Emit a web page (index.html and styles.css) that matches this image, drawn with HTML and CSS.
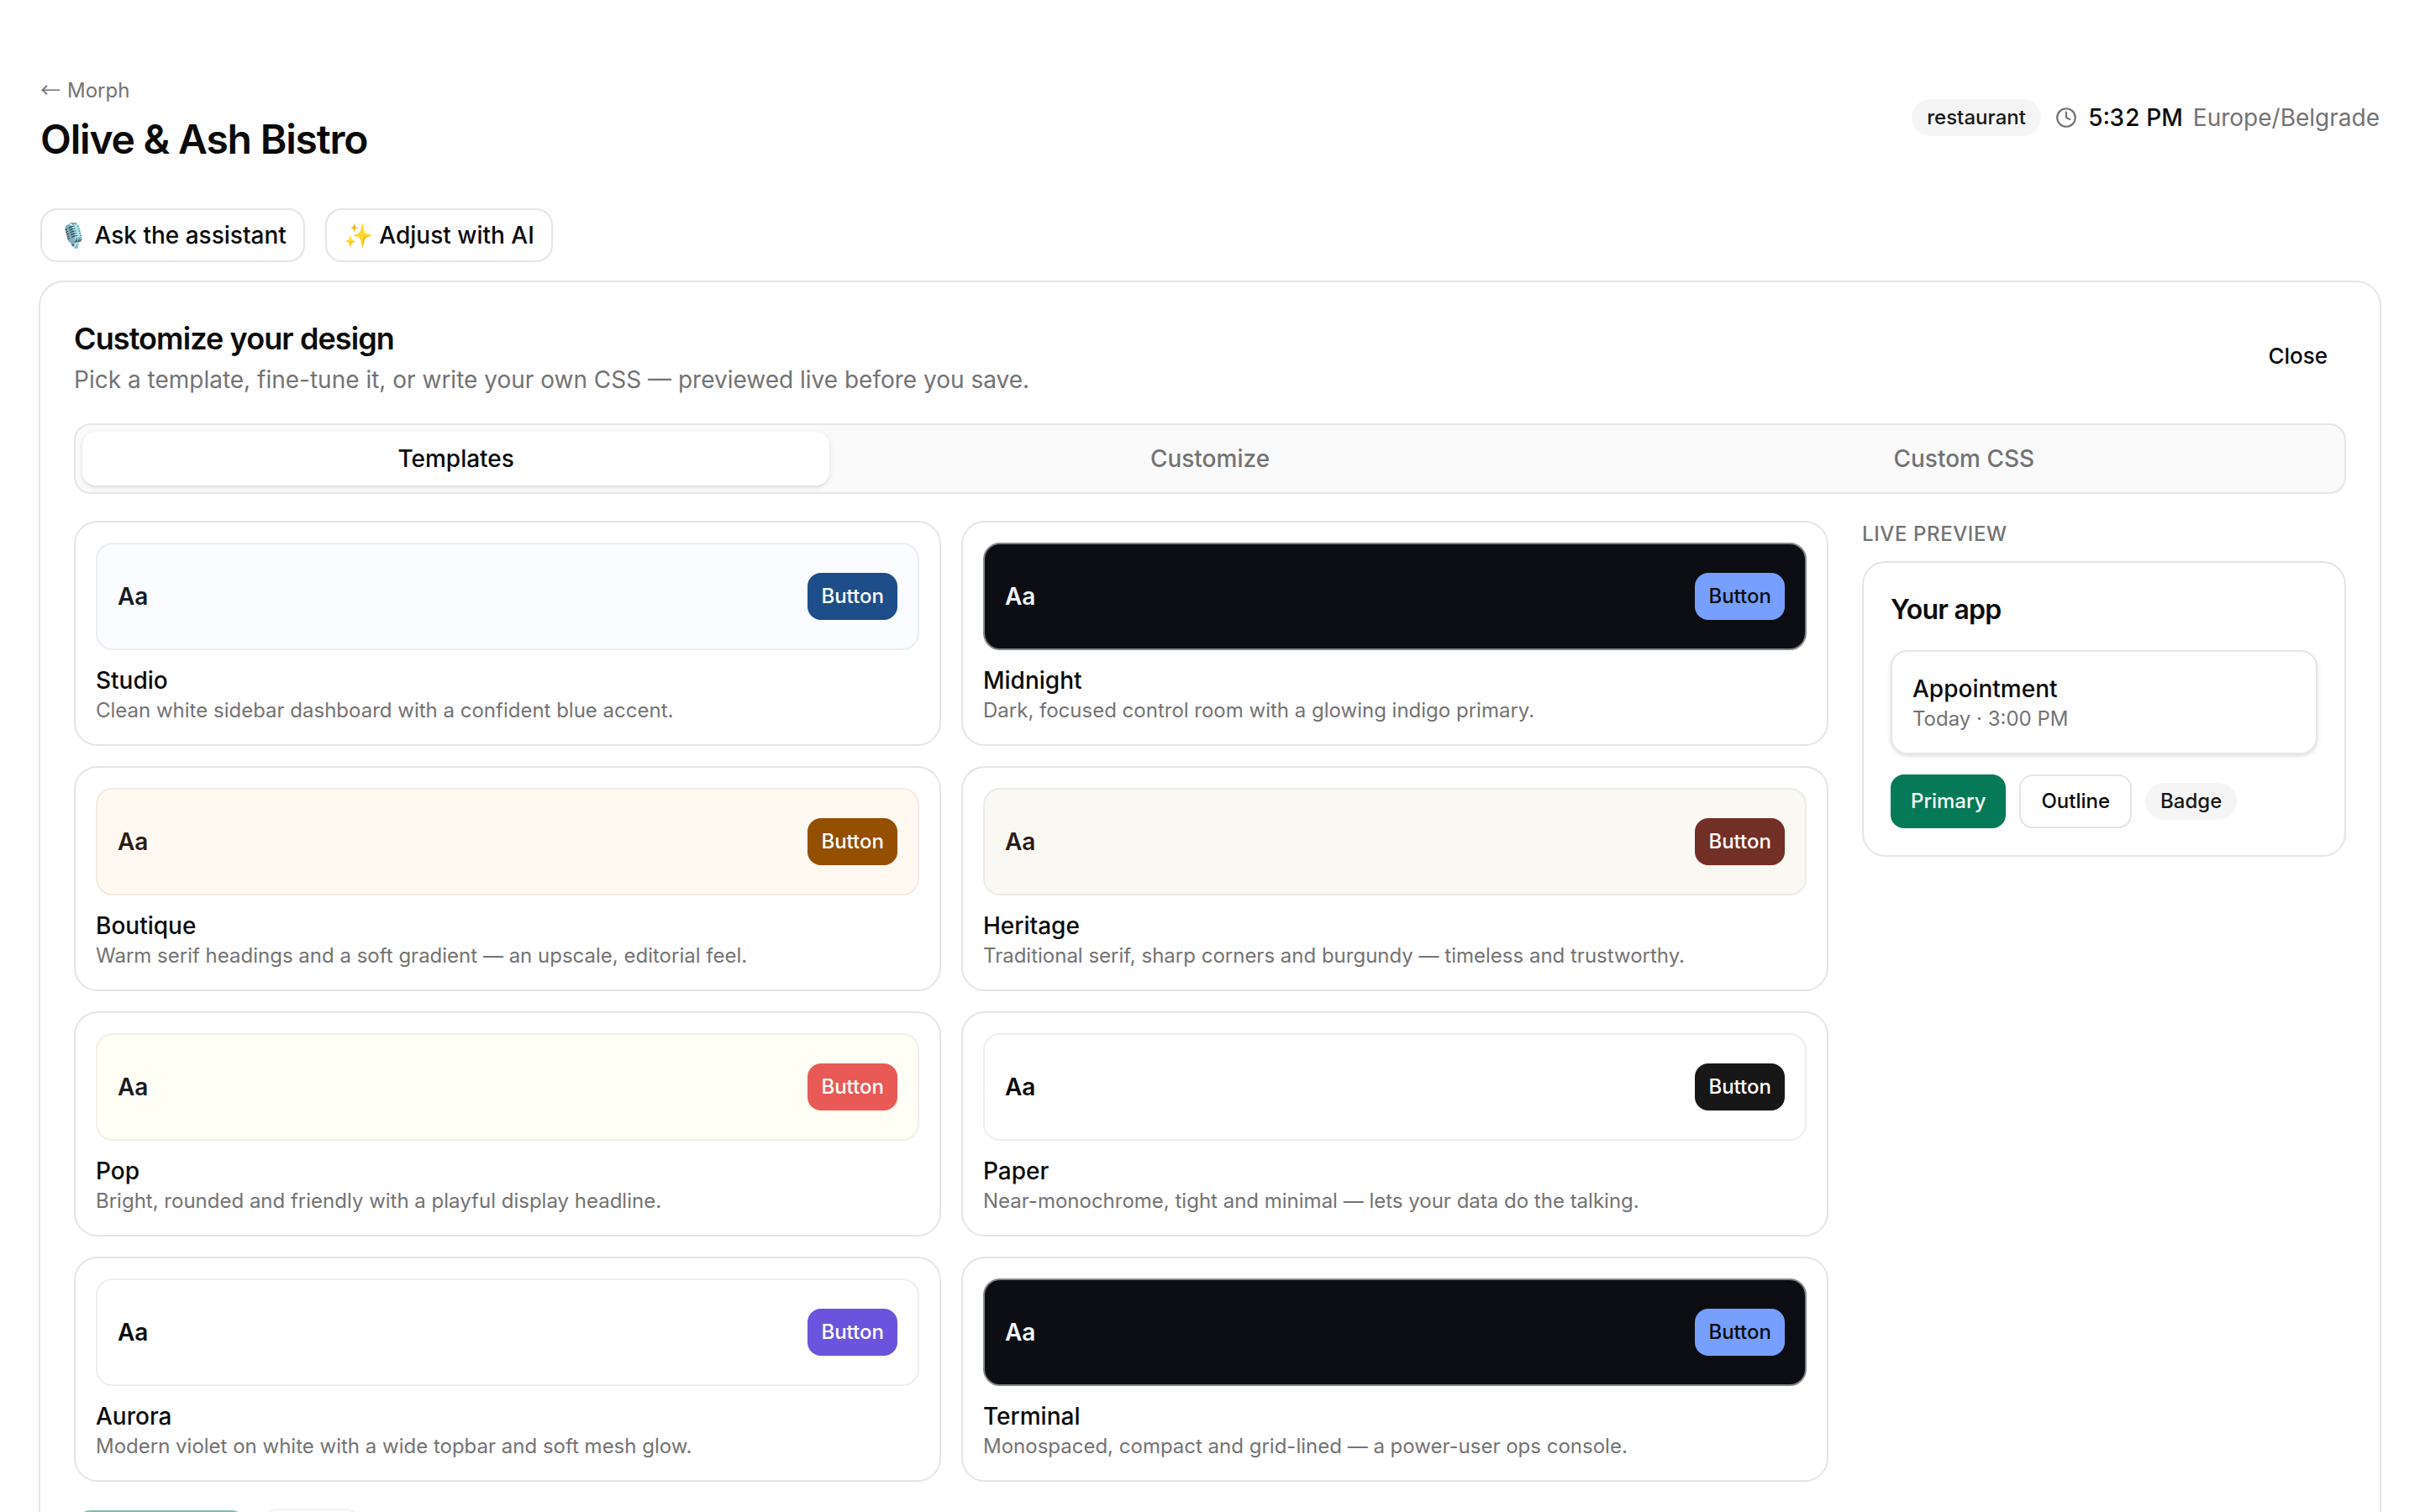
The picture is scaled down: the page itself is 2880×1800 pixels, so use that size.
FILE: index.html
```html
<!DOCTYPE html>
<html lang="en">
<head>
<meta charset="utf-8">
<meta name="viewport" content="width=device-width, initial-scale=1">
<title>Olive &amp; Ash Bistro</title>
<link rel="stylesheet" href="styles.css">
</head>
<body>
<main class="page">
  <header class="page-header">
    <div class="page-heading">
      <a class="back-link" href="#"><span class="back-arrow">←</span> Morph</a>
      <h1 class="page-title">Olive &amp; Ash Bistro</h1>
    </div>
    <div class="page-meta">
      <span class="badge">restaurant</span>
      <span class="clock">
        <svg class="clock-icon" viewBox="-1 -1 26 26" fill="none" stroke="currentColor" stroke-width="2" stroke-linecap="round" stroke-linejoin="round" aria-hidden="true"><circle cx="12" cy="12" r="10"/><path d="M12 6v6l4 2"/></svg>
        <time class="clock-time">5:32 PM</time>
        <span>Europe/Belgrade</span>
      </span>
    </div>
  </header>

  <div class="toolbar">
    <button class="btn btn-large" type="button">🎙️ Ask the assistant</button>
    <button class="btn btn-large" type="button">✨ Adjust with AI</button>
  </div>

  <section class="panel">
    <header class="panel-header">
      <div>
        <h2 class="panel-title">Customize your design</h2>
        <p class="panel-text">Pick a template, fine-tune it, or write your own CSS — previewed live before you save.</p>
      </div>
      <button class="btn btn-ghost" type="button">Close</button>
    </header>

    <div class="tabs" role="tablist">
      <button class="tab tab-active" type="button" role="tab" aria-selected="true">Templates</button>
      <button class="tab" type="button" role="tab" aria-selected="false">Customize</button>
      <button class="tab" type="button" role="tab" aria-selected="false">Custom CSS</button>
    </div>

    <div class="editor">
      <div class="templates">
        <button class="template" type="button">
          <span class="swatch studio"><span class="swatch-type">Aa</span><span class="swatch-button">Button</span></span>
          <span class="template-name">Studio</span>
          <span class="template-text">Clean white sidebar dashboard with a confident blue accent.</span>
        </button>
        <button class="template" type="button">
          <span class="swatch midnight"><span class="swatch-type">Aa</span><span class="swatch-button">Button</span></span>
          <span class="template-name">Midnight</span>
          <span class="template-text">Dark, focused control room with a glowing indigo primary.</span>
        </button>
        <button class="template" type="button">
          <span class="swatch boutique"><span class="swatch-type">Aa</span><span class="swatch-button">Button</span></span>
          <span class="template-name">Boutique</span>
          <span class="template-text">Warm serif headings and a soft gradient — an upscale, editorial feel.</span>
        </button>
        <button class="template" type="button">
          <span class="swatch heritage"><span class="swatch-type">Aa</span><span class="swatch-button">Button</span></span>
          <span class="template-name">Heritage</span>
          <span class="template-text">Traditional serif, sharp corners and burgundy — timeless and trustworthy.</span>
        </button>
        <button class="template" type="button">
          <span class="swatch pop"><span class="swatch-type">Aa</span><span class="swatch-button">Button</span></span>
          <span class="template-name">Pop</span>
          <span class="template-text">Bright, rounded and friendly with a playful display headline.</span>
        </button>
        <button class="template" type="button">
          <span class="swatch paper"><span class="swatch-type">Aa</span><span class="swatch-button">Button</span></span>
          <span class="template-name">Paper</span>
          <span class="template-text">Near-monochrome, tight and minimal — lets your data do the talking.</span>
        </button>
        <button class="template" type="button">
          <span class="swatch aurora"><span class="swatch-type">Aa</span><span class="swatch-button">Button</span></span>
          <span class="template-name">Aurora</span>
          <span class="template-text">Modern violet on white with a wide topbar and soft mesh glow.</span>
        </button>
        <button class="template" type="button">
          <span class="swatch midnight"><span class="swatch-type">Aa</span><span class="swatch-button">Button</span></span>
          <span class="template-name">Terminal</span>
          <span class="template-text">Monospaced, compact and grid-lined — a power-user ops console.</span>
        </button>
      </div>

      <aside class="preview">
        <h3 class="preview-label">Live preview</h3>
        <div class="preview-frame">
          <h4 class="preview-title">Your app</h4>
          <div class="preview-card">
            <p class="template-name">Appointment</p>
            <p class="template-text">Today · 3:00 PM</p>
          </div>
          <div class="preview-actions">
            <button class="sample sample-primary" type="button">Primary</button>
            <button class="sample sample-outline" type="button">Outline</button>
            <span class="badge">Badge</span>
          </div>
        </div>
      </aside>
    </div>

    <footer class="panel-footer">
      <button class="btn btn-large btn-primary" type="button" disabled>Save design</button>
      <button class="btn btn-large" type="button" disabled>Reset</button>
    </footer>
  </section>
</main>
</body>
</html>
```
FILE: styles.css
```css
:root {
  --text: #0a0a0a;
  --muted: #737373;
  --border: #e5e5e5;
  --primary: #067a57;
}

* {
  box-sizing: border-box;
}

body {
  margin: 0;
  background: #fff;
  color: var(--text);
  font: 400 28px/40px Inter, "Liberation Sans", sans-serif;
}

h1, h2, h3, h4, p {
  margin: 0;
}

button {
  font: inherit;
  color: inherit;
}

.page {
  padding: 82px 46px 48px;
}

.page-header {
  display: flex;
  align-items: center;
  justify-content: space-between;
  margin: 0 2px 50px;
}

.back-link {
  display: flex;
  align-items: baseline;
  gap: 8px;
  color: var(--muted);
  font-size: 24px;
  line-height: 52px;
  text-decoration: none;
}

.back-arrow {
  font-family: "Noto Sans CJK JP", sans-serif;
  line-height: 24px;
}

.page-title {
  font-size: 48px;
  line-height: 64px;
  font-weight: 600;
  letter-spacing: -0.025em;
}

.page-meta {
  display: flex;
  align-items: center;
  gap: 16px;
}

.badge {
  padding: 6px 18px;
  border-radius: 22px;
  background: #f5f5f5;
  color: #171717;
  font-size: 24px;
  line-height: 32px;
  font-weight: 500;
}

.clock {
  display: flex;
  align-items: center;
  gap: 12px;
  color: var(--muted);
}

.clock-icon {
  width: 28px;
  height: 28px;
}

.clock-time {
  color: var(--text);
  font-weight: 500;
  font-variant-numeric: tabular-nums;
}

.toolbar {
  display: flex;
  gap: 24px;
  margin: 0 2px 22px;
}

.btn {
  padding: 10px 20px;
  border: 2px solid var(--border);
  border-radius: 20px;
  background: #fff;
  font-size: 26px;
  line-height: 40px;
  font-weight: 500;
}

.btn-large {
  font-size: 28px;
}

.btn-ghost {
  border-color: transparent;
  background: transparent;
}

.btn-primary {
  border-color: transparent;
  background: var(--primary) padding-box;
  color: #fafafa;
}

.btn:disabled {
  opacity: 0.5;
}

.panel {
  padding: 40px;
  border: 2px solid var(--border);
  border-radius: 30px;
}

.panel-header {
  display: flex;
  align-items: center;
  justify-content: space-between;
  margin-bottom: 32px;
}

.panel-title {
  margin-bottom: 2px;
  font-size: 36px;
  line-height: 54px;
  font-weight: 600;
  letter-spacing: -0.025em;
}

.panel-text {
  color: var(--muted);
}

.tabs {
  display: grid;
  grid-template-columns: repeat(3, 1fr);
  gap: 8px;
  margin-bottom: 32px;
  padding: 8px;
  border: 2px solid var(--border);
  border-radius: 20px;
  background: #fafafa;
}

.tab {
  padding: 12px;
  border: 0;
  border-radius: 16px;
  background: transparent;
  color: var(--muted);
  font-weight: 500;
}

.tab-active {
  background: #fff;
  color: var(--text);
  box-shadow: 0 2px 6px rgb(0 0 0 / 10%), 0 2px 4px -2px rgb(0 0 0 / 10%);
}

.editor {
  display: grid;
  grid-template-columns: 1fr 576px;
  align-items: start;
  gap: 40px;
}

.templates {
  display: grid;
  grid-template-columns: repeat(2, 1fr);
  gap: 24px;
}

.template {
  display: flex;
  flex-direction: column;
  padding: 24px;
  border: 2px solid var(--border);
  border-radius: 28px;
  background: #fff;
  text-align: left;
}

.template-name {
  font-weight: 500;
}

.template-text {
  color: var(--muted);
  font-size: 24px;
  line-height: 32px;
}

.swatch {
  display: flex;
  align-items: center;
  justify-content: space-between;
  margin-bottom: 16px;
  padding: 34px 24px;
  border: 2px solid #eee;
  border-radius: 20px;
}

.swatch-type {
  font-weight: 600;
}

.swatch-button {
  padding: 12px 16px;
  border-radius: 16px;
  color: #fff;
  font-size: 24px;
  line-height: 32px;
  font-weight: 500;
}

.studio { background: #fbfcff; color: #151b26; border-color: #ebedf0; }
.studio .swatch-button { background: #1d4e89; }
.midnight { background: #0c0e13; color: #f3f5fa; border-color: #858688; }
.midnight .swatch-button { background: #769fff; color: #0c0e13; }
.boutique { background: #fff9f1; color: #2b1b14; border-color: #f0ebe4; }
.boutique .swatch-button { background: #944f00; }
.heritage { background: #f9f8f3; color: #2b1b17; border-color: #ebeae6; }
.heritage .swatch-button { background: #722f26; }
.pop { background: #fffff5; color: #1b1b24; border-color: #f0f0e8; }
.pop .swatch-button { background: #e95a56; }
.paper { background: #fff; }
.paper .swatch-button { background: #171717; }
.aurora { background: #fff; }
.aurora .swatch-button { background: #6b54dd; }

.preview-label {
  margin-bottom: 16px;
  color: var(--muted);
  font-size: 24px;
  line-height: 32px;
  font-weight: 500;
  letter-spacing: 0.025em;
  text-transform: uppercase;
}

.preview-frame {
  display: grid;
  gap: 24px;
  padding: 32px;
  border: 2px solid var(--border);
  border-radius: 28px;
}

.preview-title {
  font-size: 32px;
  line-height: 48px;
  font-weight: 600;
  letter-spacing: -0.025em;
}

.preview-card {
  padding: 24px;
  border: 2px solid var(--border);
  border-radius: 20px;
  box-shadow: 0 2px 6px rgb(0 0 0 / 10%), 0 2px 4px -2px rgb(0 0 0 / 10%);
}

.preview-actions {
  display: flex;
  align-items: center;
  gap: 16px;
}

.sample {
  height: 64px;
  padding: 0 24px;
  border: 0;
  border-radius: 16px;
  background: #fff;
  font-size: 24px;
  line-height: 32px;
  font-weight: 500;
}

.sample-primary {
  background: var(--primary);
  color: #fafafa;
}

.sample-outline {
  border: 2px solid var(--border);
}

.panel-footer {
  display: flex;
  gap: 16px;
  margin-top: 32px;
}
```
